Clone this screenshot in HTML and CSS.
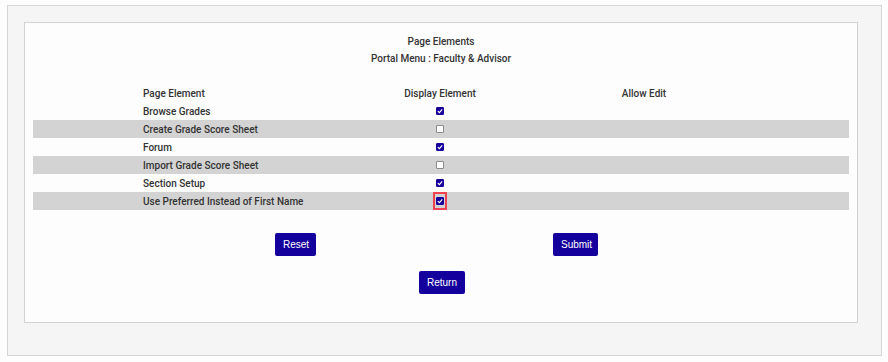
FILE: index.html
```html
<!DOCTYPE html>
<html lang="en">
<head>
    <meta charset="UTF-8">
    <title>Page Elements</title>
    <link rel="stylesheet" href="styles.css">
</head>
<body>
    <div class="outer">
        <div class="panel">
            <div class="title">Page Elements</div>
            <div class="subtitle">Portal Menu : Faculty &amp; Advisor</div>

            <div class="grid">
                <div class="row head">
                    <span class="name">Page Element</span>
                    <span class="col">Display Element</span>
                    <span class="col">Allow Edit</span>
                </div>
                <div class="row">
                    <span class="name">Browse Grades</span>
                    <span class="col"><span class="box on"><svg viewBox="0 0 9 9"><path d="M2 4.6 L3.8 6.3 L7 2.6" /></svg></span></span>
                    <span class="col"></span>
                </div>
                <div class="row alt">
                    <span class="name">Create Grade Score Sheet</span>
                    <span class="col"><span class="box"></span></span>
                    <span class="col"></span>
                </div>
                <div class="row">
                    <span class="name">Forum</span>
                    <span class="col"><span class="box on"><svg viewBox="0 0 9 9"><path d="M2 4.6 L3.8 6.3 L7 2.6" /></svg></span></span>
                    <span class="col"></span>
                </div>
                <div class="row alt">
                    <span class="name">Import Grade Score Sheet</span>
                    <span class="col"><span class="box"></span></span>
                    <span class="col"></span>
                </div>
                <div class="row">
                    <span class="name">Section Setup</span>
                    <span class="col"><span class="box on"><svg viewBox="0 0 9 9"><path d="M2 4.6 L3.8 6.3 L7 2.6" /></svg></span></span>
                    <span class="col"></span>
                </div>
                <div class="row alt">
                    <span class="name">Use Preferred Instead of First Name</span>
                    <span class="col"><span class="focus"><span class="box on"><svg viewBox="0 0 9 9"><path d="M2 4.6 L3.8 6.3 L7 2.6" /></svg></span></span></span>
                    <span class="col"></span>
                </div>
            </div>

            <div class="actions">
                <button class="btn reset">Reset</button>
                <button class="btn submit">Submit</button>
            </div>
            <div class="back">
                <button class="btn">Return</button>
            </div>
        </div>
    </div>
</body>
</html>
```

FILE: styles.css
```css
body {
    margin: 0;
    padding: 5px 6px 6px 7px;
    background: #fdfdfd;
    font-family: Roboto, "Liberation Sans", sans-serif;
    font-size: 10px;
    font-weight: 500;
    color: #333;
}
.outer {
    width: 875px;
    height: 351px;
    box-sizing: border-box;
    background: #f5f5f5;
    border: 1px solid #d6d6d6;
    padding: 16px 23px 0 16px;
}
.panel {
    height: 301px;
    box-sizing: border-box;
    background: #fdfdfd;
    border: 1px solid #d3d3d3;
    padding: 12px 8px 0 8px;
}
.title {
    text-align: center;
    line-height: 13px;
}
.subtitle {
    text-align: center;
    line-height: 13px;
    margin-top: 4px;
}
.grid {
    margin-top: 19px;
}
.row {
    display: grid;
    grid-template-columns: 110px 195px 204px 204px 1fr;
    height: 18px;
    align-items: center;
}
.row.alt {
    background: #d3d3d3;
}
.row .name {
    grid-column: 2;
}
.col {
    text-align: center;
    display: flex;
    justify-content: center;
    align-items: center;
}
.box {
    width: 8px;
    height: 8px;
    box-sizing: border-box;
    border: 1px solid #8a8a8a;
    background: #fff;
    border-radius: 1px;
    display: block;
}
.box.on {
    background: #17009a;
    border-color: #17009a;
}
.box svg {
    display: block;
    width: 8px;
    height: 8px;
    margin: -1px;
}
.box svg path {
    fill: none;
    stroke: #fff;
    stroke-width: 1.3;
}
.focus {
    display: block;
    padding: 3px 1px;
    border: 2px solid #ef4450;
}
.actions {
    display: grid;
    grid-template-columns: 242px 41px 237px 45px;
    margin-top: 23px;
}
.actions .reset {
    grid-column: 2;
}
.actions .submit {
    grid-column: 4;
}
.back {
    display: flex;
    justify-content: center;
    margin-top: 15px;
    padding-left: 2px;
}
.btn {
    height: 23px;
    padding: 0 8px;
    background: #14009c;
    color: #fff;
    border: none;
    border-radius: 2px;
    font-family: "Liberation Sans", Arial, sans-serif;
    font-size: 10px;
    font-weight: normal;
}
```
